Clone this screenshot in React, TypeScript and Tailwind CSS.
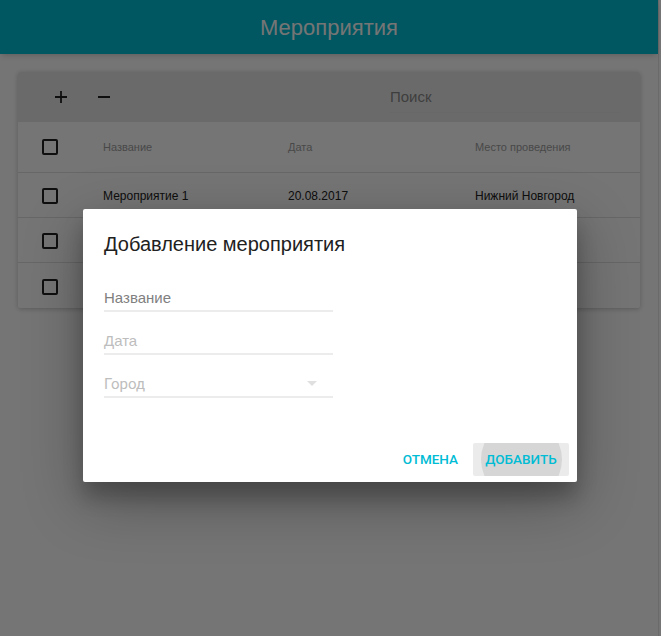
import React from 'react';

const rows = [
  { name: 'Мероприятие 1', date: '20.08.2017', place: 'Нижний Новгород' },
  { name: '', date: '', place: '' },
  { name: '', date: '', place: '' },
];

const Checkbox = () => (
  <div className="h-[16px] w-[16px] rounded-[2px] border-2 border-[#222]" />
);

const Field = ({ label, dark, select }: { label: string; dark?: boolean; select?: boolean }) => (
  <div className="flex h-[43px] w-[229px] flex-col justify-end">
    <div className="flex items-center justify-between pb-[3px]">
      <span className={`text-[15px] leading-[18px] ${dark ? 'text-[#808080]' : 'text-[#bdbdbd]'}`}>
        {label}
      </span>
      {select && (
        <svg width="10" height="6" viewBox="0 0 10 6" className="mr-[16px]">
          <path d="M0 0h10L5 5z" fill="#e0e0e0" />
        </svg>
      )}
    </div>
    <div className="h-[2px] bg-[#ececec]" />
  </div>
);

export default function App() {
  return (
    <div className="relative h-[636px] w-[661px] overflow-hidden bg-white font-['Liberation_Sans',Arial,sans-serif]">
      <div className="h-full w-[659px] border-r border-[#e6e6e6]">
        <div className="flex h-[54px] w-[658px] items-center justify-center bg-[#00bcd4] shadow-md">
          <span className="text-[22px] text-white">Мероприятия</span>
        </div>

        <div className="mx-[18px] mt-[18px] w-[622px] overflow-hidden rounded-[2px] bg-white shadow-[0_1px_6px_rgba(0,0,0,0.12),0_1px_4px_rgba(0,0,0,0.12)]">
          <div className="flex h-[50px] items-center bg-[#e8e8e8]">
            <svg width="14" height="14" viewBox="0 0 14 14" className="ml-[36px]">
              <path d="M7 1v12M1 7h12" stroke="#222" strokeWidth="1.8" />
            </svg>
            <svg width="14" height="14" viewBox="0 0 14 14" className="ml-[29px]">
              <path d="M1 7h12" stroke="#222" strokeWidth="1.8" />
            </svg>
            <div className="ml-[279px] flex w-[230px] flex-col">
              <span className="pt-[6px] text-[15px] leading-[18px] text-[#888]">Поиск</span>
              <div className="mt-[6px] h-px bg-[#e2e2e2]" />
            </div>
          </div>

          <div className="grid h-[51px] grid-cols-[85px_185px_187px_1fr] items-center border-b border-[#e0e0e0] text-[11px] text-[#9e9e9e]">
            <div className="pl-[24px]">
              <Checkbox />
            </div>
            <span>Название</span>
            <span>Дата</span>
            <span>Место проведения</span>
          </div>

          {rows.map((r, i) => (
            <div
              key={i}
              className={`grid h-[45px] grid-cols-[85px_185px_187px_1fr] items-center pt-[2px] text-[12px] text-[#212121] ${
                i < rows.length - 1 ? 'border-b border-[#e0e0e0]' : ''
              }`}
            >
              <div className="pl-[24px]">
                <Checkbox />
              </div>
              <span>{r.name}</span>
              <span>{r.date}</span>
              <span>{r.place}</span>
            </div>
          ))}
        </div>
      </div>

      <div className="absolute inset-0 bg-[rgba(0,0,0,0.54)]" />

      <div className="absolute left-[83px] top-[209px] flex h-[273px] w-[494px] flex-col rounded-[2px] bg-white shadow-[0_19px_60px_rgba(0,0,0,0.3),0_15px_20px_rgba(0,0,0,0.22)]">
        <div className="px-[21px] pt-[22px] text-[20px] leading-[26px] text-[#212121]">
          Добавление мероприятия
        </div>
        <div className="flex flex-col px-[21px] pt-[12px]">
          <Field label="Название" dark />
          <Field label="Дата" />
          <div className="font-['Roboto',sans-serif]">
            <Field label="Город" select />
          </div>
        </div>
        <div className="mt-auto flex items-center justify-end gap-[15px] pb-[6px] pr-[8px] font-['Roboto',sans-serif] text-[13.5px] font-medium text-[#00bcd4]">
          <span>ОТМЕНА</span>
          <div className="relative flex h-[33px] w-[96px] items-center justify-center overflow-hidden rounded-[2px] bg-[#ebebeb]">
            <div className="absolute left-[8px] top-[-24px] h-[81px] w-[81px] rounded-full bg-[#d6d6d6]" />
            <span className="relative">ДОБАВИТЬ</span>
          </div>
        </div>
      </div>
    </div>
  );
}
